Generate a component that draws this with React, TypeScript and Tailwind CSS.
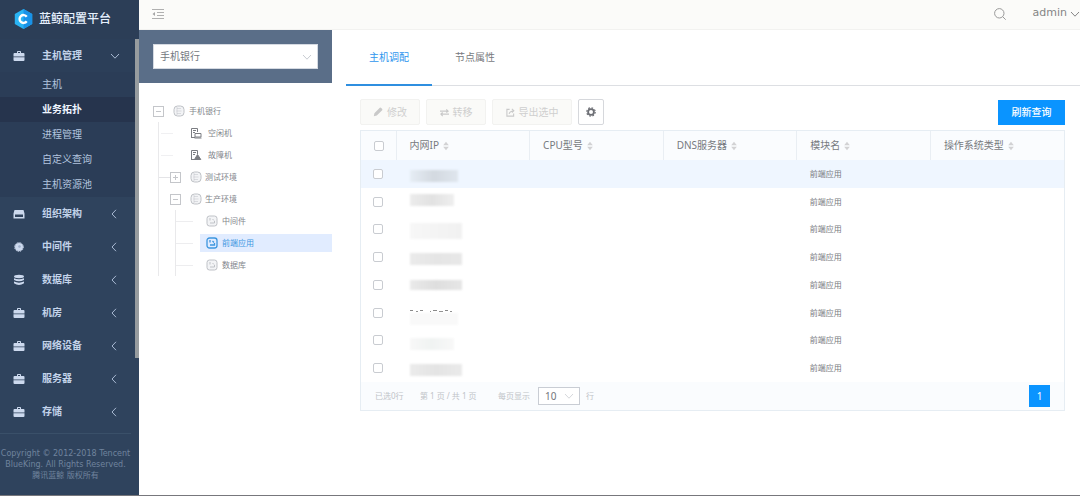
import { useState } from 'react'
import type { ReactNode } from 'react'
import clsx from 'clsx'

type MenuIcon = 'case' | 'window' | 'chip' | 'database'

const hostMenu = ['主机', '业务拓扑', '进程管理', '自定义查询', '主机资源池']

const groups: { title: string; icon: MenuIcon }[] = [
  { title: '组织架构', icon: 'window' },
  { title: '中间件', icon: 'chip' },
  { title: '数据库', icon: 'database' },
  { title: '机房', icon: 'case' },
  { title: '网络设备', icon: 'case' },
  { title: '服务器', icon: 'case' },
  { title: '存储', icon: 'case' },
]

const columns = ['内网IP', 'CPU型号', 'DNS服务器', '模块名', '操作系统类型']

// Masked addresses, one smear per host
const hosts = [
  { mask: 'mt-1 w-12 h-3 bg-linear-to-r from-[#e6edf5] via-[#d3d9e0] to-[#dfe6ee]', dots: false },
  { mask: '-mt-1 w-11 h-3 bg-linear-to-r from-[#ececec] via-[#e2e2e2] to-[#efefef]', dots: false },
  { mask: 'mt-1 w-13 h-4 bg-linear-to-r from-[#f7f7f7] to-[#f1f1f1]', dots: false },
  { mask: 'mt-1 w-13 h-3 bg-linear-to-r from-[#ebebeb] via-[#e5e5e5] to-[#e8e8e8]', dots: false },
  { mask: 'w-13 h-[10px] bg-linear-to-r from-[#eaeaea] via-[#dedede] to-[#e6e6e6]', dots: false },
  { mask: 'w-12 h-3 bg-[#f9f9f9]', dots: true },
  { mask: 'mt-2 w-11 h-3 bg-linear-to-r from-[#f8f8f8] via-[#f0f3f2] to-[#f8f8f8]', dots: false },
  { mask: 'mt-1 w-13 h-3 bg-linear-to-r from-[#ebebeb] via-[#e4e4e4] to-[#eaeaea]', dots: false },
]

function GroupIcon({ icon }: { icon: MenuIcon }) {
  return (
    <svg viewBox="0 0 12 12" className="w-3 h-3 shrink-0" fill="#ccd9ee">
      {icon === 'case' && (
        <>
          <path d="M4 3V1.800Q4 1 4.800 1H7.200Q8 1 8 1.800V3H10.500Q11.500 3 11.500 4V6.600H.5V4Q.5 3 1.500 3ZM5 3H7V2H5Z" />
          <path d="M.5 7.200H11.500V10Q11.500 11 10.500 11H1.500Q.5 11 .5 10Z" />
        </>
      )}
      {icon === 'window' && (
        <path fillRule="evenodd" d="M1.500 2H10.500L11.500 5.500V10.500H.5V5.500ZM2 6.500V9H10V6.500Z" />
      )}
      {icon === 'chip' && (
        <>
          <circle cx="6" cy="6" r="4" />
          <circle cx="6" cy="6" r="4.400" fill="none" stroke="#ccd9ee" strokeDasharray="1.300 1" />
          <circle cx="6.500" cy="5.500" r="1.300" fill="#9fb0cb" />
        </>
      )}
      {icon === 'database' && (
        <>
          <ellipse cx="6" cy="2.500" rx="5" ry="1.700" />
          <path d="M1 4.300Q6 6.300 11 4.300V6Q6 8.500 1 6ZM1 7.600Q6 9.800 11 7.600V9.300Q6 12.500 1 9.300Z" />
        </>
      )}
    </svg>
  )
}

function Chevron({ className, dir = 'down' }: { className?: string; dir?: 'down' | 'left' }) {
  return (
    <svg viewBox="0 0 10 10" className={clsx('w-[10px] h-[10px]', className)} fill="none" stroke="currentColor">
      <path d={dir === 'down' ? 'M1 3L5 7.200L9 3' : 'M7 .8L3 5L7 9.200'} />
    </svg>
  )
}

function Sorter() {
  return (
    <svg viewBox="0 0 6 10" className="w-[6px] h-[10px]" fill="#d2d2d4">
      <path d="M3 .8L5.800 4.300H.2ZM3 9.200L5.800 5.700H.2Z" />
    </svg>
  )
}

function NodeIcon({ active = false, round = false }: { active?: boolean; round?: boolean }) {
  return (
    <svg
      viewBox="0 0 12 12"
      className="w-3 h-3 shrink-0"
      fill="none"
      stroke={active ? '#3c96df' : '#bfc2c7'}
      strokeWidth={active ? 1.3 : 1}
    >
      <rect x="1" y="1" width="10" height="10" rx={round ? 3.5 : 2.5} fill={active ? '#e1ecff' : '#f3f4f6'} />
      {round ? (
        <path d="M4 3.500H8M3.500 6H8.500M4 8.500H8M4 2V10" opacity=".5" />
      ) : (
        <path d="M4 3V5.500M4 8H8.500V6M6.500 4L8 5.500" />
      )}
    </svg>
  )
}

function PoolIcon({ fault = false }: { fault?: boolean }) {
  return (
    <svg viewBox="0 0 12 12" className="w-3 h-3 shrink-0" fill="none" stroke="#7b7d82">
      <path d="M1.500 10.500V1.500H7.500V5M3 3.500H6M3 5.500H5M1 10.500H5" />
      {fault ? <path d="M7.500 5.500L10.800 10.500H4.500Z" fill="#7b7d82" /> : <path d="M5 6.500H11V10H5ZM4.500 11H11.500" />}
    </svg>
  )
}

function Toggle({ open, label }: { open: boolean; label: string }) {
  return (
    <button aria-label={label} aria-expanded={open} className="shrink-0">
      <svg viewBox="0 0 11 11" className="w-[11px] h-[11px]" fill="none" stroke="#c4c6ca">
        <rect x=".5" y=".5" width="10" height="10" />
        <path d={open ? 'M3 5.500H8' : 'M3 5.500H8M5.500 3V8'} />
      </svg>
    </button>
  )
}

function ToolButton({ children, className }: { children: ReactNode; className?: string }) {
  return (
    <button
      disabled
      className={clsx(
        'flex h-[26px] items-center justify-center gap-1 rounded-xs border border-[#f2f2f0] bg-[#fafaf8] text-[10px] text-[#cfcfcf]',
        className,
      )}
    >
      {children}
    </button>
  )
}

function Sidebar() {
  const [current, setCurrent] = useState('业务拓扑')

  return (
    <aside className="relative flex w-[139px] shrink-0 flex-col bg-[#2f435d] text-[10px] text-[#c3d3ea]">
      <div className="flex h-[39px] items-center gap-[5px] bg-[#2c3e57] pb-[2px] pl-[13px]">
        <svg viewBox="0 0 22 24" className="h-[22px] w-[21px]">
          <path d="M11 1L20.500 6.500V17.500L11 23L1.500 17.500V6.500Z" fill="#2ab4f4" />
          <path d="M11 1L20.500 6.500V17.500L11 23Z" fill="#1992e8" />
          <path d="M14.500 9.500A4.300 4.300 0 1 0 14.500 14.500" fill="none" stroke="#fff" strokeWidth="2.600" />
        </svg>
        <span className="text-[12px] font-medium text-[#e6f0fd]">蓝鲸配置平台</span>
      </div>

      <nav>
        <button className="flex h-[33px] w-full items-center bg-[#2c3f59] pl-[13px] font-bold">
          <GroupIcon icon="case" />
          <span className="ml-[17px]">主机管理</span>
          <Chevron className="mr-[19px] ml-auto text-[#a9bad3]" />
        </button>
        <ul className="bg-[#2b3d57]">
          {hostMenu.map((item) => (
            <li key={item}>
              <a
                href="#"
                onClick={() => setCurrent(item)}
                className={clsx(
                  'flex h-[25px] items-center pl-[42px]',
                  item === current ? 'bg-[#26344d] font-bold text-[#eef5ff]' : 'text-[#b3c5df]',
                )}
              >
                {item}
              </a>
            </li>
          ))}
        </ul>
        {groups.map((g) => (
          <button key={g.title} className="flex h-[33px] w-full items-center pl-[13px] font-bold">
            <GroupIcon icon={g.icon} />
            <span className="ml-[17px]">{g.title}</span>
            <Chevron dir="left" className="mr-5 ml-auto text-[#a9bad3]" />
          </button>
        ))}
      </nav>

      <footer className="mt-[5px] mr-2 flex flex-col items-center border-t border-[#3a5069] pt-[14px] font-['DejaVu_Sans','Noto_Sans_CJK_SC',sans-serif] text-[8px] leading-[11px] whitespace-nowrap text-[#70839d]">
        <span>Copyright © 2012-2018 Tencent</span>
        <span>BlueKing. All Rights Reserved.</span>
        <span>腾讯蓝鲸 版权所有</span>
      </footer>

      {/* Scroll thumb */}
      <div className="absolute top-[39px] right-0 h-[319px] w-[4px] bg-[#979c9f]" />
    </aside>
  )
}

function Topology() {
  return (
    <section className="w-[193px] shrink-0">
      <div className="bg-[#5a6e88] p-[14px]">
        <div className="relative">
          <select
            aria-label="业务"
            className="block h-[25px] w-full appearance-none border border-[#d5dae2] bg-white pl-[6px] text-[10px] text-[#737780]"
          >
            <option>手机银行</option>
          </select>
          <Chevron className="pointer-events-none absolute top-2 right-[6px] text-[#c8ccd2]" />
        </div>
      </div>

      <div className="pt-[17px] pl-[14px] text-[8px] text-[#83868c]">
        <div className="flex h-[22px] items-center">
          <Toggle open label="手机银行" />
          <span className="ml-[9px] flex items-center gap-1">
            <NodeIcon round />
            手机银行
          </span>
        </div>
        <ul className="ml-[5px] border-l border-[#e9e9eb]">
          {['空闲机', '故障机'].map((name, i) => (
            <li key={name} className="flex h-[22px] items-center">
              <span className="mr-[17px] ml-[2px] w-3 border-t border-[#f0f0f2]" />
              <PoolIcon fault={i === 1} />
              <span className="ml-[6px]">{name}</span>
            </li>
          ))}
          <li className="flex h-[22px] items-center">
            <span className="w-[11px] border-t border-[#e4e4e7]" />
            <Toggle open={false} label="测试环境" />
            <span className="ml-[9px] flex items-center gap-[3px]">
              <NodeIcon round />
              测试环境
            </span>
          </li>
          <li>
            <div className="flex h-[22px] items-center pl-[11px]">
              <Toggle open label="生产环境" />
              <span className="ml-[9px] flex items-center gap-[3px]">
                <NodeIcon round />
                生产环境
              </span>
            </div>
            <ul className="ml-4 border-l border-[#e9e9eb]">
              {['中间件', '前端应用', '数据库'].map((name) => {
                const active = name === '前端应用'
                return (
                  <li key={name} className="flex h-[22px] items-center">
                    <span className="mr-[7px] w-[17px] border-t border-[#ededef]" />
                    <a
                      href="#"
                      className={clsx(
                        'flex h-[18px] flex-1 items-center gap-1 pl-[6px]',
                        active && 'bg-[#e1ecff] text-[#3c96df]',
                      )}
                    >
                      <NodeIcon active={active} />
                      {name}
                    </a>
                  </li>
                )
              })}
            </ul>
          </li>
        </ul>
      </div>
    </section>
  )
}

function HostTable() {
  const check =
    'block h-[10px] w-[10px] appearance-none rounded-[2px] border border-[#c9ccd1] bg-white checked:bg-[#0a94ff]'

  return (
    <div className="mt-[5px] border border-[#e6edf3]">
      <table className="h-[251px] w-full table-fixed border-collapse text-left">
        <thead>
          <tr className="h-[29px] bg-[#fafcfe] text-[10px] text-[#777a80]">
            <th className="w-[35px] border-r border-[#e9eef3] pl-[13px]">
              <input type="checkbox" aria-label="全选" className={check} />
            </th>
            {columns.map((c) => (
              <th key={c} className="border-r border-[#e9eef3] pl-[13px] font-normal last:border-r-0">
                <span className="flex items-center gap-1">
                  {c}
                  <Sorter />
                </span>
              </th>
            ))}
          </tr>
        </thead>
        <tbody>
          {hosts.map((h, i) => (
            <tr key={i} className={clsx('h-[27px] text-[8px] text-[#777a80]', i === 0 && 'bg-[#eff6ff]')}>
              <td className="pl-3">
                <input type="checkbox" aria-label={`主机 ${i + 1}`} className={check} />
              </td>
              <td className="pl-[14px]">
                {h.dots && (
                  <svg viewBox="0 0 48 4" className="mt-2 block h-1 w-12" stroke="#8a8a8a">
                    <path d="M0 1.500H3M6 2.500H8M10 1.500H13M20 2.500H21M23 1.500H27M29 2.500H33M35 1.500H38M40 2.500H42" />
                  </svg>
                )}
                <div className={clsx('blur-[1px]', h.mask)} />
              </td>
              <td />
              <td />
              <td className="pl-[13px]">前端应用</td>
              <td />
            </tr>
          ))}
        </tbody>
      </table>

      <div className="flex h-[28px] items-center bg-[#fafcfe] px-[14px] text-[8px] text-[#c0c3c8]">
        <span className="w-[45px]">已选0行</span>
        <span className="w-[78px]">第 1 页 / 共 1 页</span>
        <label htmlFor="size" className="w-10">
          每页显示
        </label>
        <div className="relative mr-[6px]">
          <select
            id="size"
            className="block h-[18px] w-[42px] appearance-none border border-[#c9cdd4] bg-white pl-[6px] text-[10px] text-[#72757b]"
          >
            <option>10</option>
          </select>
          <Chevron className="pointer-events-none absolute top-1 right-[6px] text-[#d6d8dc]" />
        </div>
        <span>行</span>
        <button className="ml-auto h-[22px] w-[21px] bg-[#0a94ff] text-[10px] text-white">1</button>
      </div>
    </div>
  )
}

export default function App() {
  return (
    <div className="flex min-h-screen border-b border-[#77777c] bg-white font-['Noto_Sans','Noto_Sans_CJK_SC',sans-serif]">
      <Sidebar />
      <div className="flex min-w-0 flex-1 flex-col">
        <header className="flex h-[30px] items-center border-b border-[#f2f2f0] bg-[#fbfbf9] pb-[2px] pl-[13px]">
          <button aria-label="收起菜单">
            <svg viewBox="0 0 12 10" className="h-[10px] w-3" fill="none" stroke="#b0b0b0">
              <path d="M0 .5H12M5 3.500H12M5 6.500H12M0 9.500H12" />
              <path d="M3 3L.5 5L3 7Z" fill="#a5a5a5" stroke="none" />
            </svg>
          </button>
          <button aria-label="搜索" className="mr-[27px] ml-auto">
            <svg viewBox="0 0 12 12" className="h-3 w-3" fill="none" stroke="#9a9a9a">
              <circle cx="5.300" cy="5.300" r="4.700" />
              <path d="M8.600 8.600L11.700 11.700" />
            </svg>
          </button>
          <button className="flex items-center gap-[3px] font-['DejaVu_Sans',sans-serif] text-[11px] text-[#858585]">
            admin
            <Chevron />
          </button>
        </header>

        <div className="flex flex-1">
          <Topology />
          <main className="min-w-0 flex-1">
            <div className="ml-[14px] flex h-[56px] border-b border-[#dddfe3] text-[10px]">
              <button className="-mb-px w-[86px] border-b-2 border-[#2f8fe0] text-[#2f96ee]">主机调配</button>
              <button className="w-[86px] text-[#77797e]">节点属性</button>
            </div>

            <div className="pt-[13px] pr-[15px] pl-[28px]">
              <div className="flex items-center gap-[6px]">
                <ToolButton className="w-[60px]">
                  <svg viewBox="0 0 10 10" className="h-[10px] w-[10px]" fill="#c9c9c9">
                    <path d="M.8 9.200L1.400 6.200L6.800 .8Q7.500 .3 8.200 1L9 1.800Q9.700 2.500 9.200 3.200L3.800 8.600Z" />
                  </svg>
                  修改
                </ToolButton>
                <ToolButton className="w-[60px]">
                  <svg viewBox="0 0 10 10" className="h-[9px] w-[9px]" fill="none" stroke="#c9c9c9" strokeWidth="1.300">
                    <path d="M0 3.500H9M7 1.500L9 3.500L7 5M10 6.800H1M3 5L1 6.800L3 9" />
                  </svg>
                  转移
                </ToolButton>
                <ToolButton className="w-[80px]">
                  <svg viewBox="0 0 10 10" className="h-[9px] w-[9px]" fill="none" stroke="#c9c9c9" strokeWidth="1.200">
                    <path d="M4 1.500H1V9H8.500V6M3.500 6.500Q4 3.500 8.500 3M6.500 1L8.700 3L6.500 5" />
                  </svg>
                  导出选中
                </ToolButton>
                <button
                  aria-label="设置"
                  className="flex h-[26px] w-[26px] items-center justify-center rounded-xs border border-[#d6d8dc] bg-white"
                >
                  <svg viewBox="0 0 10 10" className="h-[10px] w-[10px]" fill="none" stroke="#6d6f75">
                    <circle cx="5" cy="5" r="2.900" strokeWidth="1.800" />
                    <circle cx="5" cy="5" r="4.200" strokeWidth="1.200" strokeDasharray="1.650 1.650" />
                  </svg>
                </button>
                <button className="ml-auto h-[25px] w-[67px] bg-[#0a94ff] text-[10px] font-medium text-white">
                  刷新查询
                </button>
              </div>
              <HostTable />
            </div>
          </main>
        </div>
      </div>
    </div>
  )
}
